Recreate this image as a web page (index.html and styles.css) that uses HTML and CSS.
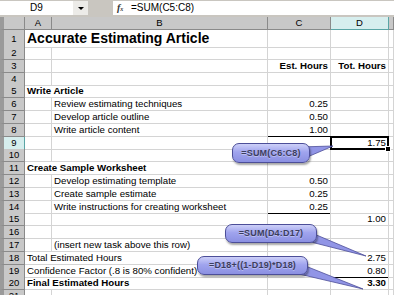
FILE: index.html
```html
<!DOCTYPE html>
<html lang="en">
<head>
    <meta charset="UTF-8">
    <meta name="viewport" content="width=device-width, initial-scale=1.0">
    <title>Accurate Estimating Article</title>
    <link rel="stylesheet" href="styles.css">
</head>
<body>
    <div class="formula-bar">
        <div class="name-box">D9</div>
        <div class="name-drop"><span class="caret"></span></div>
        <div class="formula"><span class="fx">f<sub>x</sub></span>=SUM(C5:C8)</div>
    </div>

    <div class="sheet">
        <div class="row head">
            <div class="rh"></div>
            <div class="ch">A</div>
            <div class="ch">B</div>
            <div class="ch">C</div>
            <div class="ch sel">D</div>
            <div class="ch"></div>
        </div>
        <div class="row r1">
            <div class="rh">1</div>
            <div class="c sp2 title">Accurate Estimating Article</div>
            <div class="c"></div><div class="c"></div><div class="c"></div>
        </div>
        <div class="row">
            <div class="rh">2</div>
            <div class="c"></div><div class="c"></div><div class="c"></div><div class="c"></div><div class="c"></div>
        </div>
        <div class="row">
            <div class="rh">3</div>
            <div class="c"></div><div class="c"></div>
            <div class="c n b">Est. Hours</div>
            <div class="c n b">Tot. Hours</div>
            <div class="c"></div>
        </div>
        <div class="row">
            <div class="rh">4</div>
            <div class="c"></div><div class="c"></div><div class="c"></div><div class="c"></div><div class="c"></div>
        </div>
        <div class="row">
            <div class="rh">5</div>
            <div class="c sp2 b">Write Article</div>
            <div class="c"></div><div class="c"></div><div class="c"></div>
        </div>
        <div class="row">
            <div class="rh">6</div>
            <div class="c"></div>
            <div class="c">Review estimating techniques</div>
            <div class="c n">0.25</div>
            <div class="c"></div><div class="c"></div>
        </div>
        <div class="row">
            <div class="rh">7</div>
            <div class="c"></div>
            <div class="c">Develop article outline</div>
            <div class="c n">0.50</div>
            <div class="c"></div><div class="c"></div>
        </div>
        <div class="row">
            <div class="rh">8</div>
            <div class="c"></div>
            <div class="c">Write article content</div>
            <div class="c n line">1.00</div>
            <div class="c"></div><div class="c"></div>
        </div>
        <div class="row">
            <div class="rh sel">9</div>
            <div class="c"></div><div class="c"></div><div class="c"></div>
            <div class="c n active">1.75</div>
            <div class="c"></div>
        </div>
        <div class="row">
            <div class="rh">10</div>
            <div class="c"></div><div class="c"></div><div class="c"></div><div class="c"></div><div class="c"></div>
        </div>
        <div class="row">
            <div class="rh">11</div>
            <div class="c sp2 b">Create Sample Worksheet</div>
            <div class="c"></div><div class="c"></div><div class="c"></div>
        </div>
        <div class="row">
            <div class="rh">12</div>
            <div class="c"></div>
            <div class="c">Develop estimating template</div>
            <div class="c n">0.50</div>
            <div class="c"></div><div class="c"></div>
        </div>
        <div class="row">
            <div class="rh">13</div>
            <div class="c"></div>
            <div class="c">Create sample estimate</div>
            <div class="c n">0.25</div>
            <div class="c"></div><div class="c"></div>
        </div>
        <div class="row">
            <div class="rh">14</div>
            <div class="c"></div>
            <div class="c">Write instructions for creating worksheet</div>
            <div class="c n line">0.25</div>
            <div class="c"></div><div class="c"></div>
        </div>
        <div class="row">
            <div class="rh">15</div>
            <div class="c"></div><div class="c"></div><div class="c"></div>
            <div class="c n">1.00</div>
            <div class="c"></div>
        </div>
        <div class="row">
            <div class="rh">16</div>
            <div class="c"></div><div class="c"></div><div class="c"></div><div class="c"></div><div class="c"></div>
        </div>
        <div class="row">
            <div class="rh">17</div>
            <div class="c"></div>
            <div class="c">(insert new task above this row)</div>
            <div class="c"></div><div class="c"></div><div class="c"></div>
        </div>
        <div class="row">
            <div class="rh">18</div>
            <div class="c sp2">Total Estimated Hours</div>
            <div class="c"></div>
            <div class="c n">2.75</div>
            <div class="c"></div>
        </div>
        <div class="row">
            <div class="rh">19</div>
            <div class="c sp2">Confidence Factor (.8 is 80% confident)</div>
            <div class="c"></div>
            <div class="c n line">0.80</div>
            <div class="c"></div>
        </div>
        <div class="row">
            <div class="rh">20</div>
            <div class="c sp2 b">Final Estimated Hours</div>
            <div class="c"></div>
            <div class="c n b">3.30</div>
            <div class="c"></div>
        </div>
        <div class="row">
            <div class="rh">21</div>
            <div class="c"></div><div class="c"></div><div class="c"></div><div class="c"></div><div class="c"></div>
        </div>

        <!-- callout tails -->
        <svg class="tails" width="394" height="278" viewBox="0 0 394 278">
            <polygon points="299,130 333,129 305,141" />
            <polygon points="300,211 366,239 307,224" />
            <polygon points="293,244 363,272 299,257" />
        </svg>
        <div class="callout c1">=SUM(C6:C8)</div>
        <div class="callout c2">=SUM(D4:D17)</div>
        <div class="callout c3">=D18+((1-D19)*D18)</div>
    </div>
</body>
</html>
```

FILE: styles.css
```css
body {
    margin: 0;
    width: 394px;
    height: 295px;
    overflow: hidden;
    background: #fff;
    font-family: "Liberation Sans", Arial, sans-serif;
    color: #000;
}

/* formula bar */
.formula-bar {
    display: flex;
    height: 17px;
    box-sizing: border-box;
    padding-top: 1px;
    background: #c9c6c0;
}

.name-box {
    width: 73px;
    height: 14px;
    background: #fff;
    font-size: 10px;
    line-height: 14px;
    text-align: center;
}

.name-drop {
    width: 15px;
    height: 14px;
    margin-right: 25px;
    background: #ecebe8;
    display: flex;
    align-items: center;
    justify-content: center;
}

.caret {
    width: 0;
    height: 0;
    border-left: 3px solid transparent;
    border-right: 3px solid transparent;
    border-top: 3px solid #000;
}

.formula {
    flex: 1;
    height: 14px;
    background: #fff;
    padding-left: 4px;
    font-size: 10px;
    line-height: 14px;
}

.fx {
    display: inline-block;
    width: 14px;
    font-family: "Liberation Serif", serif;
    font-style: italic;
    font-weight: bold;
    font-size: 10px;
    color: #333;
}

.fx sub {
    font-size: 6px;
    vertical-align: 0;
}

/* sheet */
.sheet {
    position: relative;
}

.row {
    display: grid;
    grid-template-columns: 25px 27px 216px 63px 58px 1fr;
    height: 12.8px;
}

.row.head {
    height: 13px;
}

.row.r1 {
    height: 17px;
}

.rh, .ch {
    box-sizing: border-box;
    background: #c8c8c8;
    border-right: 1px solid #8a8a8a;
    border-bottom: 1px solid #8a8a8a;
    font-size: 9.5px;
    text-align: center;
    line-height: 12px;
}

.rh {
    border-left: 4px solid #9a9a9a;
}

.r1 .rh {
    line-height: 17px;
}

.ch.sel, .rh.sel {
    background: #d6eeee;
    border-color: #5aa5a5;
}

.rh.sel {
    border-left-color: #9a9a9a;
}

.c {
    box-sizing: border-box;
    border-right: 1px solid #d4d4d4;
    border-bottom: 1px solid #d4d4d4;
    padding: 0 2px;
    font-size: 9.7px;
    line-height: 12px;
    white-space: nowrap;
}

.sp2 {
    grid-column: span 2;
}

.title {
    font-size: 14px;
    font-weight: bold;
    line-height: 17px;
}

.b {
    font-weight: bold;
}

.n {
    text-align: right;
}

.line {
    border-bottom-color: #000;
}

.active {
    position: relative;
}

.active::after {
    content: "";
    position: absolute;
    left: -1px;
    top: -1px;
    right: -1px;
    bottom: -1px;
    border: 2px solid #000;
}

.active::before {
    content: "";
    position: absolute;
    right: -3px;
    bottom: -3px;
    width: 4px;
    height: 4px;
    background: #000;
    border: 1px solid #fff;
    z-index: 1;
}

/* callouts */
.tails {
    position: absolute;
    left: 0;
    top: 0;
    z-index: 2;
}

.tails polygon {
    fill: #9195e6;
    stroke: #4c4e98;
    stroke-width: 0.8;
}

.callout {
    position: absolute;
    z-index: 3;
    box-sizing: border-box;
    height: 19px;
    border: 1px solid #4c4e98;
    border-radius: 7px;
    background: linear-gradient(#cdd0f8, #a0a4ee 45%, #8b90e2);
    box-shadow: 1px 2px 2px rgba(0, 0, 0, 0.35);
    font-size: 9px;
    font-weight: bold;
    letter-spacing: 0.2px;
    line-height: 17px;
    text-align: center;
    color: #3c3d5e;
    text-shadow: 0 1px 0 rgba(255, 255, 255, 0.35);
}

.c1 {
    left: 232px;
    top: 126px;
    width: 78px;
    height: 20px;
    line-height: 18px;
}

.c2 {
    left: 225px;
    top: 207px;
    width: 92px;
}

.c3 {
    left: 197px;
    top: 239px;
    width: 111px;
}
```
